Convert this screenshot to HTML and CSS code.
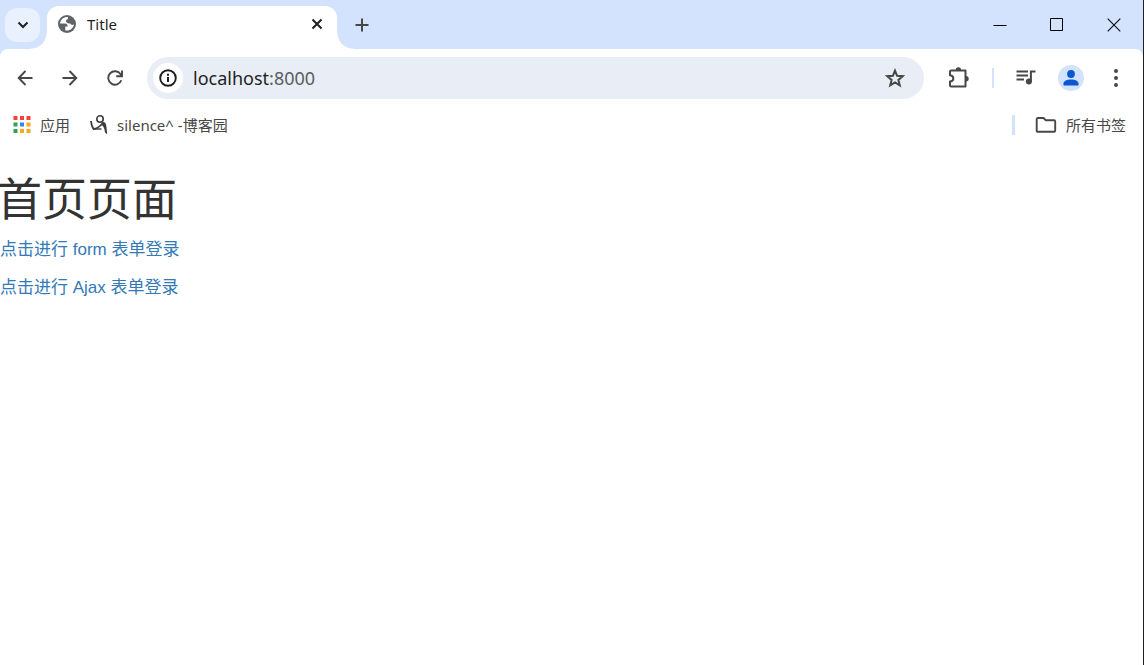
FILE: index.html
```html
<!DOCTYPE html>
<html lang="zh-CN">
<head>
<meta charset="utf-8">
<title>Title</title>
<link rel="stylesheet" href="styles.css">
</head>
<body>
<div class="window">
  <header class="tabstrip">
    <button class="tab-search" aria-label="搜索标签页">
      <svg width="12" height="8" viewBox="0 0 12 8"><path d="M1.500 1.500 6 6l4.500-4.500" fill="none" stroke="#1f1f1f" stroke-width="2"/></svg>
    </button>
    <div class="tab">
      <svg class="tab-icon" width="18" height="18" viewBox="0 0 18 18"><circle cx="9" cy="9" r="9" fill="#5f6368"/><path d="M10 2C5.800 1.700 2.500 4.500 2 8.500h5c2 .2 2.800 1.300 2.800 3.100H7.300v3.900C12 16.300 15.500 13 16 9.300c-1.300 1-3.200.7-3.800-.8-2.600.3-4-.5-4.200-2.400C8 4.500 9.200 4.300 10 4z" fill="#fff"/></svg>
      <span class="tab-title">Title</span>
      <button class="tab-close" aria-label="关闭"><svg width="12" height="12" viewBox="0 0 12 12"><path d="m1.500 1.500 9 9m0-9-9 9" stroke="#1f1f1f" stroke-width="2"/></svg></button>
    </div>
    <button class="new-tab" aria-label="新标签页"><svg width="14" height="14" viewBox="0 0 14 14"><path d="M7 .5v13M.5 7h13" stroke="#474747" stroke-width="2"/></svg></button>
    <div class="window-controls">
      <button aria-label="最小化"><svg width="14" height="14" viewBox="0 0 14 14"><path d="M.5 7.500h13" stroke="#000"/></svg></button>
      <button aria-label="最大化"><svg width="14" height="14" viewBox="0 0 14 14"><path d="M.5.5h12v12H.5z" fill="none" stroke="#000"/></svg></button>
      <button aria-label="关闭窗口"><svg width="14" height="14" viewBox="0 0 14 14"><path d="m.7.7 12.600 12.600m0-12.600L.7 13.300" stroke="#111" stroke-width="1.200"/></svg></button>
    </div>
  </header>

  <div class="chrome">
    <nav class="toolbar">
      <div class="nav-buttons">
        <button aria-label="后退"><svg width="16" height="16" viewBox="0 0 16 16"><path d="M15.500 8H2m6.500-7L1.700 8l6.800 7" fill="none" stroke="#474747" stroke-width="1.900"/></svg></button>
        <button aria-label="前进"><svg width="16" height="16" viewBox="0 0 16 16"><path d="M.5 8H14M7.500 1l6.800 7-6.800 7" fill="none" stroke="#474747" stroke-width="1.900"/></svg></button>
        <button aria-label="重新加载"><svg width="16" height="16" viewBox="0 0 16 16"><path d="M14.300 10.200A6.700 6.700 0 1 1 13.600 4.300l1.200 1.500M15 .5v5.700H9.200" fill="none" stroke="#474747" stroke-width="1.900"/></svg></button>
      </div>
      <div class="omnibox">
        <button class="site-info" aria-label="网站信息"><svg width="18" height="18" viewBox="0 0 18 18"><circle cx="9" cy="9" r="7.800" fill="none" stroke="#1f1f1f" stroke-width="1.900"/><path d="M9 8v5M9 4.700v2" stroke="#1f1f1f" stroke-width="2"/></svg></button>
        <span class="url">localhost<span class="port">:8000</span></span>
        <button class="star" aria-label="为此标签页添加书签"><svg width="20" height="20" viewBox="0 0 20 20"><path d="m10 2.600 2.100 5.200 5.600.4-4.300 3.700 1.400 5.500L10 14.500l-4.800 2.900 1.400-5.500-4.300-3.700 5.600-.4z" fill="none" stroke="#474747" stroke-width="2"/></svg></button>
      </div>
      <div class="actions">
        <button aria-label="扩展程序"><svg width="22" height="22" viewBox="0 0 22 22"><path d="M3.200 3.500h14.300v16H3.200q-1.200 0-1.200-1.300V14.500c4.400-.4 4.400-5.700 0-6.200V4.700q0-1.200 1.200-1.200z" fill="none" stroke="#474747" stroke-width="2" stroke-linejoin="round"/><path d="M7.700 3a2.700 2.700 0 0 1 5.400 0zM18 9a2.700 2.700 0 0 1 0 5.400z" fill="#474747"/></svg></button>
        <span class="divider"></span>
        <button aria-label="媒体控件"><svg width="20" height="16" viewBox="0 0 20 16"><path d="M.5 1.500H12M.5 5.500H12M.5 9.500H8M14.900 12V1.500H19.500" fill="none" stroke="#474747" stroke-width="2"/><circle cx="12.900" cy="11.500" r="3" fill="#474747"/></svg></button>
        <button class="avatar" aria-label="个人资料"><svg width="16" height="16" viewBox="0 0 16 16"><circle cx="8" cy="4" r="3.900" fill="#0b57d0"/><path d="M.5 15.500v-2C.5 11 4 9.500 8 9.500s7.500 1.500 7.500 4v2z" fill="#0b57d0"/></svg></button>
        <button aria-label="更多"><svg width="6" height="18" viewBox="0 0 6 18"><g fill="#474747"><circle cx="3" cy="2" r="2"/><circle cx="3" cy="9" r="2"/><circle cx="3" cy="16" r="2"/></g></svg></button>
      </div>
    </nav>

    <nav class="bookmarks">
      <a class="bookmark" href="#apps"><svg width="18" height="18" viewBox="0 0 18 18"><path d="M.5 0h4v4h-4zM7 0h4v4H7zM13.500 0h4v4h-4z" fill="#f0443a"/><path d="M.5 6.500h4v4h-4zM.5 13h4v4h-4z" fill="#34a05a"/><path d="M7 6.500h4v4H7z" fill="#2b8cf0"/><path d="M13.500 6.500h4v4h-4zM7 13h4v4H7zM13.500 13h4v4h-4z" fill="#f8a914"/></svg><span>应用</span></a>
      <a class="bookmark" href="#blog"><svg width="18" height="20" viewBox="0 0 18 20"><g fill="none" stroke="#3c3c3c"><circle cx="10" cy="4" r="3.200" stroke-width="1.600"/><path d="M1 6c.3 3.500 1 6 2.500 8 3-.3 6-2 9-5.500" stroke-width="1.800"/><path d="M3.500 14h8" stroke-width="1.400"/></g><path d="M12.300 7c2.900-.4 4 1.500 4.200 5.500l.7 6.800-2.200-1.800c-.5-4-1.200-6.200-3.700-8z" fill="#3c3c3c"/></svg><span>silence^ -博客园</span></a>
      <span class="divider divider-end"></span>
      <a class="bookmark" href="#all"><svg width="22" height="18" viewBox="0 0 22 18"><path d="M3 2h5.500l2.300 2.300H19q1.200 0 1.200 1.200v9q0 1.300-1.200 1.300H3q-1.300 0-1.300-1.300V3.300Q1.700 2 3 2z" fill="none" stroke="#474747" stroke-width="1.900" stroke-linejoin="round"/></svg><span>所有书签</span></a>
    </nav>
  </div>

  <main class="page">
    <h1>首页页面</h1>
    <p><a href="#form">点击进行 form 表单登录</a></p>
    <p><a href="#ajax">点击进行 Ajax 表单登录</a></p>
  </main>
</div>
</body>
</html>
```
FILE: styles.css
```css
* { box-sizing: border-box; }

body {
  margin: 0;
  background: #fff;
  font-family: "Noto Sans", "Noto Sans CJK SC", sans-serif;
}

.window {
  min-height: 100vh;
  border-right: 1px solid #202124;
  overflow: hidden;
}

button {
  display: flex;
  align-items: center;
  justify-content: center;
  padding: 0;
  border: 0;
  background: none;
}

svg { display: block; flex: none; }

.tabstrip {
  display: flex;
  align-items: center;
  height: 49px;
  padding-left: 5px;
  background: #d3e3fd;
}

.tab-search {
  width: 35px;
  height: 34px;
  border-radius: 12px;
  background: #e9f1fe;
}

.tab {
  position: relative;
  display: flex;
  align-items: center;
  align-self: flex-end;
  width: 290px;
  height: 43px;
  margin-left: 7px;
  padding: 0 12px 8px 11px;
  border-radius: 12px 12px 0 0;
  background: #fff;
}

.tab::before,
.tab::after {
  content: "";
  position: absolute;
  bottom: 0;
  width: 16px;
  height: 16px;
}

.tab::before {
  right: 100%;
  background: radial-gradient(circle at 0 0, transparent 15px, #fff 16px);
}

.tab::after {
  left: 100%;
  background: radial-gradient(circle at 100% 0, transparent 15px, #fff 16px);
}

.tab-title {
  flex: 1;
  margin-left: 11px;
  font-size: 15px;
  color: #1f1f1f;
}

.tab-close { width: 16px; height: 16px; }

.new-tab { width: 34px; height: 34px; margin-left: 8px; }

.window-controls {
  display: flex;
  gap: 43px;
  margin-left: auto;
  padding-right: 22px;
}

.chrome { background: linear-gradient(#d3e3fd 8px, #fff 8px); }

.toolbar {
  display: flex;
  align-items: center;
  height: 58px;
  padding: 0 24px 0 17px;
  border-radius: 8px 8px 0 0;
  background: #fff;
}

.nav-buttons { display: flex; gap: 29px; }

.omnibox {
  display: flex;
  flex: 1;
  align-items: center;
  height: 42px;
  margin-left: 24px;
  padding: 0 19px 0 6px;
  border-radius: 21px;
  background: #e9edf6;
}

.site-info {
  width: 30px;
  height: 30px;
  border-radius: 50%;
  background: #fff;
}

.url {
  flex: 1;
  margin-left: 10px;
  font-size: 18px;
  color: #1f1f1f;
}

.port { color: #5a5d61; }

.actions {
  display: flex;
  align-items: center;
  margin-left: 24px;
  gap: 22px;
}

.divider {
  width: 2px;
  height: 20px;
  background: #d3e3fd;
}

.avatar {
  width: 26px;
  height: 26px;
  border-radius: 50%;
  background: #d3e3fd;
}

.actions > :last-child { margin-left: 7px; }

.bookmarks {
  display: flex;
  align-items: center;
  height: 35px;
  padding: 0 17px 0 13px;
  gap: 20px;
}

.bookmark {
  display: flex;
  align-items: center;
  gap: 9px;
  font-size: 15px;
  color: #474747;
  text-decoration: none;
}

.divider-end { width: 3px; margin-left: auto; }

.page {
  font-family: "Liberation Sans", "Noto Sans CJK SC", sans-serif;
  color: #333;
}

h1 {
  margin: 34px 0 0 -3px;
  font-size: 45px;
  font-weight: 400;
  line-height: 50px;
}

.page p {
  margin: 11px 0 12px;
  font-size: 17px;
  line-height: 26px;
}

.page a { color: #337ab7; text-decoration: none; }
```
